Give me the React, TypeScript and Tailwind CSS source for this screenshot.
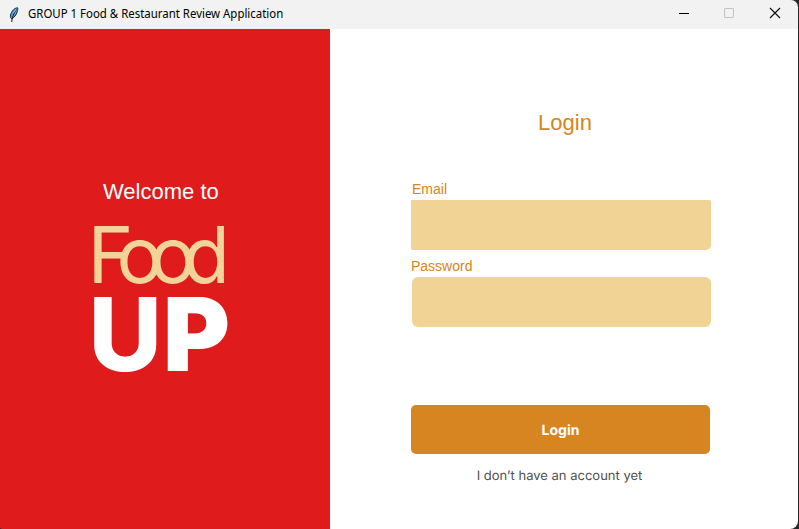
import React from 'react';

function Feather() {
  return (
    <svg width="10" height="16" viewBox="0 0 10 16" className="shrink-0">
      <path d="M8.600 .8C5.600.8 2.400 4.200 1.500 8.200c-.4 2 .2 3.100 1 3.500 2.700-.8 4.800-4 5.700-6.900.5-1.700.8-3.100.4-4Z" fill="#5b9fe0" stroke="#15202c" strokeWidth="1" />
      <path d="M7.500 2.500C5.500 5 3.500 8.500 2.700 15" fill="none" stroke="#111" strokeWidth="1" />
      <path d="M7 2.500 4 6.500" stroke="#8cc0f2" strokeWidth="1" />
    </svg>
  );
}

function TitleBar() {
  return (
    <header className="flex h-[29px] shrink-0 items-center bg-[#f2f2f2] pl-[9px] pr-[17px]">
      <Feather />
      <h1 className="ml-[9px] flex-1 whitespace-nowrap pb-px font-['Noto_Sans',sans-serif] text-[12px] leading-4 text-black">
        <span className="inline-block origin-left scale-x-[0.952]">GROUP 1 Food &amp; Restaurant Review Application</span>
      </h1>
      <div className="flex items-center gap-[34px] pb-[3px]">
        <svg width="12" height="12" viewBox="0 0 12 12"><path d="M2 6.500h10" stroke="#000" /></svg>
        <svg width="12" height="12" viewBox="0 0 12 12"><rect x="1.500" y="1.500" width="9" height="9" rx=".5" fill="none" stroke="#c2c2c2" /></svg>
        <svg width="12" height="12" viewBox="0 0 12 12"><path d="m1 1 10 10M11 1 1 11" stroke="#111" strokeWidth="1.200" /></svg>
      </div>
    </header>
  );
}

function Brand() {
  return (
    <section className="flex w-[330px] shrink-0 flex-col bg-[#df1b1b] pt-[150px] pl-[74px]">
      <p className="ml-[29px] whitespace-nowrap font-['Liberation_Sans',Arial,sans-serif] text-[22px] leading-[26px] text-white">Welcome to</p>
      <svg width="180" height="200" viewBox="74 205 180 200" aria-label="Food UP">
        <g fontFamily="Inter, sans-serif">
          <g fontSize="78" fontWeight="400" fill="#f2d398">
            <text x="87.500 116.500 149.500" y="283">Foo</text>
            <text transform="translate(183 283) scale(.98 1)">d</text>
          </g>
          <g fontSize="102" fill="#fff">
            <text transform="translate(88.500 371) scale(.99 1)" fontWeight="850">U</text>
            <text x="163" y="371" fontWeight="900">P</text>
          </g>
        </g>
      </svg>
    </section>
  );
}

function LoginForm() {
  return (
    <section className="flex flex-1 flex-col bg-white pt-[81px] pl-[81px] font-['Liberation_Sans',Arial,sans-serif] text-[#d68520]">
      <h2 className="w-[308px] text-center text-[22px] leading-[26px]">Login</h2>
      <label htmlFor="email" className="mt-[45px] ml-px text-[14px] leading-4">Email</label>
      <input id="email" className="mt-[3px] h-[50px] w-[300px] rounded-tr-[2px] rounded-br-[5px] rounded-bl-[2px] bg-[#f1d396] px-3 outline-none" />
      <label htmlFor="password" className="mt-[8px] text-[14px] leading-4">Password</label>
      <input id="password" type="password" className="mt-[3px] ml-px h-[50px] w-[299px] rounded-[6px] bg-[#f1d396] px-3 outline-none" />
      <button className="mt-[78px] h-[49px] w-[299px] rounded-[5px] bg-[#d68520] pt-px font-['Inter',sans-serif] text-[14px] font-bold text-white [text-rendering:geometricPrecision]">Login</button>
      <a className="mt-[13px] w-[297px] text-center font-['Inter',sans-serif] text-[13px] leading-[18px] text-[#505050] [text-rendering:geometricPrecision]">I don’t have an account yet</a>
    </section>
  );
}

export default function App() {
  return (
    <div className="h-[529px] w-[799px] bg-[#29292b] pr-px">
      <div className="flex h-full flex-col overflow-hidden rounded-tr-[7px] rounded-br-[8px] rounded-bl-[2px]">
        <TitleBar />
        <main className="flex flex-1">
          <Brand />
          <LoginForm />
        </main>
      </div>
    </div>
  );
}
